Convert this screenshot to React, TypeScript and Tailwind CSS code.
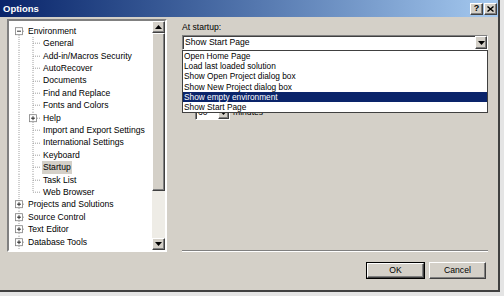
import React from "react";

type Row = {
  label: string;
  level: 0 | 1;
  expander?: "plus" | "minus";
  last?: boolean;
  selected?: boolean;
};

const ROWS: Row[] = [
  { label: "Environment", level: 0, expander: "minus" },
  { label: "General", level: 1 },
  { label: "Add-in/Macros Security", level: 1 },
  { label: "AutoRecover", level: 1 },
  { label: "Documents", level: 1 },
  { label: "Find and Replace", level: 1 },
  { label: "Fonts and Colors", level: 1 },
  { label: "Help", level: 1, expander: "plus" },
  { label: "Import and Export Settings", level: 1 },
  { label: "International Settings", level: 1 },
  { label: "Keyboard", level: 1 },
  { label: "Startup", level: 1, selected: true },
  { label: "Task List", level: 1 },
  { label: "Web Browser", level: 1, last: true },
  { label: "Projects and Solutions", level: 0, expander: "plus" },
  { label: "Source Control", level: 0, expander: "plus" },
  { label: "Text Editor", level: 0, expander: "plus" },
  { label: "Database Tools", level: 0, expander: "plus" },
];

const STARTUP = [
  "Open Home Page",
  "Load last loaded solution",
  "Show Open Project dialog box",
  "Show New Project dialog box",
  "Show empty environment",
  "Show Start Page",
];

const H = 12.4;
const DOT = "#a0a0a0";

function Expander({ cx, kind }: { cx: number; kind: "plus" | "minus" }) {
  const y = H / 2;
  return (
    <g>
      <rect x={cx - 3.5} y={y - 3.5} width={7} height={7} fill="white" stroke="#808080" strokeWidth={0.8} />
      <line x1={cx - 2} y1={y} x2={cx + 2} y2={y} stroke="black" strokeWidth={0.8} />
      {kind === "plus" && <line x1={cx} y1={y - 2} x2={cx} y2={y + 2} stroke="black" strokeWidth={0.8} />}
    </g>
  );
}

function Connector({ row, index }: { row: Row; index: number }) {
  const mid = H / 2;
  const isFirst = index === 0;
  const c0 = 10; // level-0 line x within svg
  const c1 = 24; // level-1 line x within svg
  return (
    <svg width={row.level === 0 ? 18 : 33} height={H} className="shrink-0">
      {row.level === 0 ? (
        <>
          <line x1={c0} y1={isFirst ? mid : 0} x2={c0} y2={H} stroke={DOT} strokeWidth={1} strokeDasharray="1 1" />
          <line x1={c0} y1={mid} x2={16} y2={mid} stroke={DOT} strokeWidth={1} strokeDasharray="1 1" />
          {row.expander && <Expander cx={c0} kind={row.expander} />}
          {isFirst && <line x1={24} y1={mid + 3.5} x2={24} y2={H} stroke={DOT} strokeWidth={1} strokeDasharray="1 1" />}
        </>
      ) : (
        <>
          <line x1={c0} y1={0} x2={c0} y2={H} stroke={DOT} strokeWidth={1} strokeDasharray="1 1" />
          <line x1={c1} y1={0} x2={c1} y2={row.last ? mid : H} stroke={DOT} strokeWidth={1} strokeDasharray="1 1" />
          <line x1={c1} y1={mid} x2={31} y2={mid} stroke={DOT} strokeWidth={1} strokeDasharray="1 1" />
          {row.expander && <Expander cx={c1} kind={row.expander} />}
        </>
      )}
    </svg>
  );
}

function Arrow({ dir }: { dir: "up" | "down" }) {
  return (
    <svg width="7" height="4" viewBox="0 0 7 4">
      {dir === "up" ? <path d="M3.5 0 L7 4 L0 4 Z" fill="black" /> : <path d="M0 0 L7 0 L3.5 4 Z" fill="black" />}
    </svg>
  );
}

function Btn3D({ className, children }: { className?: string; children?: React.ReactNode }) {
  return (
    <div
      className={`flex items-center justify-center bg-[#d4d0c8] border border-t-white border-l-white border-r-[#404040] border-b-[#404040] shadow-[inset_-1px_-1px_0_#808080] ${className ?? ""}`}
    >
      {children}
    </div>
  );
}

const SUNKEN =
  "bg-white border border-t-[#808080] border-l-[#808080] border-r-white border-b-white shadow-[inset_1px_1px_0_#404040]";

export default function App() {
  return (
    <div className="w-[504px] h-[296px] bg-[#e4e4e4] overflow-hidden" style={{ fontFamily: '"Liberation Sans", Arial, sans-serif' }}>
      <div className="w-[500px] h-[292px] bg-[#d4d0c8] border-r-2 border-b-2 border-r-[#404040] border-b-[#404040] flex flex-col">
        {/* title bar */}
        <div className="h-[17px] flex items-center justify-between bg-gradient-to-r from-[#0a246a] to-[#a6caf0] pl-[3px] pr-[1px]">
          <span className="text-white font-bold text-[9.5px] leading-none">Options</span>
          <div className="flex gap-[1px]">
            <Btn3D className="w-[13px] h-[12px]">
              <span className="text-[9px] font-bold leading-none text-black">?</span>
            </Btn3D>
            <Btn3D className="w-[13px] h-[12px]">
              <svg width="7" height="6" viewBox="0 0 7 6">
                <path d="M0.5 0.5 L6.5 5.5 M6.5 0.5 L0.5 5.5" stroke="black" strokeWidth="1.4" />
              </svg>
            </Btn3D>
          </div>
        </div>

        <div className="flex pt-[2px] pl-[7px]">
          {/* tree */}
          <div className="w-[160px] h-[233px] border-2 border-t-[#808080] border-l-[#808080] border-r-white border-b-white bg-white flex overflow-hidden">
            <div className="flex-1 pt-[4px] text-[8.6px] text-black overflow-hidden">
              {ROWS.map((r, i) => (
                <div key={r.label} className="flex items-center" style={{ height: H }}>
                  <Connector row={r} index={i} />
                  <span className={`whitespace-nowrap leading-none px-[1px] py-[2px] ${r.selected ? "bg-[#d4d0c8]" : ""}`}>
                    {r.label}
                  </span>
                </div>
              ))}
              <svg width="18" height="4" className="block">
                <line x1={10} y1={0} x2={10} y2={4} stroke={DOT} strokeWidth={1} strokeDasharray="1 1" />
                <line x1={37.5} y1={2} x2={37.5} y2={4} stroke="#404040" strokeWidth={1} />
              </svg>
            </div>
            {/* scrollbar */}
            <div className="w-[13px] flex flex-col bg-[#eeece6]">
              <Btn3D className="h-[12px] w-[13px]">
                <Arrow dir="up" />
              </Btn3D>
              <Btn3D className="h-[158px] w-[13px]" />
              <div className="flex-1" />
              <Btn3D className="h-[12px] w-[13px]">
                <Arrow dir="down" />
              </Btn3D>
            </div>
          </div>

          {/* right panel */}
          <div className="relative ml-[15px] w-[306px] pt-[4px]">
            <div className="text-[8.6px] leading-none text-black h-[12px]">At startup:</div>
            <div className={`h-[15px] flex items-center ${SUNKEN}`}>
              <span className="flex-1 pl-[2px] text-[8.6px] leading-none text-black">Show Start Page</span>
              <Btn3D className="w-[12px] h-[13px]">
                <Arrow dir="down" />
              </Btn3D>
            </div>
            <div className="mt-[55px] ml-[13px] flex items-center gap-[3px]">
              <div className={`w-[35px] h-[15px] flex items-center ${SUNKEN}`}>
                <span className="flex-1 pl-[2px] text-[8.6px] leading-none">60</span>
                <Btn3D className="w-[11px] h-[13px]">
                  <Arrow dir="down" />
                </Btn3D>
              </div>
              <span className="text-[8.6px] leading-none">minutes</span>
            </div>
            {/* dropdown list */}
            <div className="absolute left-0 top-[31px] w-[306px] bg-white border border-[#404040] text-[8.3px] text-black">
              {STARTUP.map((s, i) => (
                <div
                  key={s}
                  className={`h-[10.2px] leading-[10.2px] pl-[1px] whitespace-nowrap ${i === 4 ? "bg-[#0a246a] text-white" : ""}`}
                >
                  {s}
                </div>
              ))}
            </div>
          </div>
        </div>

        {/* separator + buttons */}
        <div className="ml-[182px] w-[306px] mt-[-2px] border-t border-t-[#808080] border-b border-b-white" />
        <div className="flex justify-end gap-[4px] pr-[12px] mt-[10px]">
          <div className="w-[59px] h-[17px] border border-black">
            <Btn3D className="w-full h-full text-[8.6px] text-black">OK</Btn3D>
          </div>
          <Btn3D className="w-[57px] h-[17px] text-[8.6px] text-black">Cancel</Btn3D>
        </div>
      </div>
    </div>
  );
}
